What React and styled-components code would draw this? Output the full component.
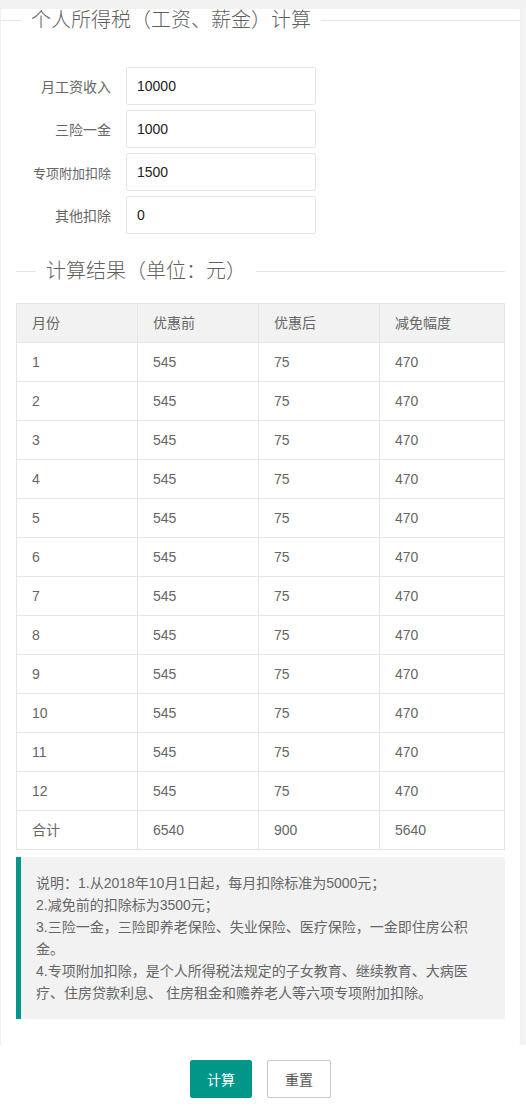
import React from "react";
import styled, { createGlobalStyle } from "styled-components";

const Global = createGlobalStyle`
  html, body { margin: 0; padding: 0; }
  body {
    background: #f2f2f2;
    font-family: "Liberation Sans", "Noto Sans CJK SC", sans-serif;
    font-size: 14px;
    color: #666;
  }
  * { box-sizing: border-box; }
`;

const Page = styled.div`
  padding: 9px 6px 0 1px;
`;

const Card = styled.div`
  background: #fff;
  border-radius: 2px;
  box-shadow: 0 1px 2px rgba(0, 0, 0, 0.05);
  padding-bottom: 26px;
`;

const TitleRow = styled.div`
  display: flex;
  align-items: center;
  height: 22px;
  &::before {
    content: "";
    width: 20px;
    height: 1px;
    background: #e6e6e6;
  }
  &::after {
    content: "";
    flex: 1;
    height: 1px;
    background: #e6e6e6;
  }
`;

const TitleText = styled.span`
  padding: 0 10px;
  font-size: 20px;
  line-height: 22px;
  font-weight: 300;
  color: #5f5f5f;
  white-space: nowrap;
`;

const Form = styled.div`
  margin-top: 36px;
  display: flex;
  flex-direction: column;
  gap: 5px;
`;

const FormRow = styled.div`
  display: flex;
  align-items: center;
`;

const Label = styled.label`
  width: 125px;
  padding-right: 15px;
  text-align: right;
  font-size: ${(p) => (p.$small ? "13px" : "14px")};
  color: #666;
  white-space: nowrap;
`;

const Input = styled.input`
  width: 190px;
  height: 38px;
  border: 1px solid #e6e6e6;
  border-radius: 2px;
  padding: 0 10px;
  font-family: "Liberation Sans", "Noto Sans CJK SC", sans-serif;
  font-size: 14px;
  color: #222;
  background: #fff;
  outline: none;
`;

const Section = styled.div`
  padding: 0 15px;
  margin-top: 26px;
`;

const Table = styled.table`
  margin-top: 21px;
  width: 100%;
  border-collapse: collapse;
  table-layout: fixed;
`;

const Th = styled.th`
  background: #f2f2f2;
  font-weight: 400;
  text-align: left;
  color: #666;
  font-size: 14px;
  line-height: 20px;
  padding: 9px 15px;
  border: 1px solid #e6e6e6;
`;

const Td = styled.td`
  color: #666;
  font-size: 14px;
  line-height: 20px;
  padding: 9px 15px;
  border: 1px solid #e6e6e6;
`;

const Quote = styled.div`
  margin-top: 7px;
  background: #f2f2f2;
  border-left: 5px solid #009688;
  border-radius: 0 2px 2px 0;
  padding: 15px 29px 15px 15px;
  line-height: 22px;
  font-size: 14px;
  color: #666;
`;

const FooterWrap = styled.div`
  margin: 0 -6px 0 -1px;
`;

const Footer = styled.div`
  background: #fff;
  height: 65px;
  padding: 15px 5px 0 0;
  display: flex;
  justify-content: center;
  align-items: flex-start;
  gap: 15px;
`;

const Button = styled.button`
  height: 38px;
  padding: 0 ${(p) => (p.$primary ? "17px" : "16px")};
  border-radius: 2px;
  font-family: "Liberation Sans", "Noto Sans CJK SC", sans-serif;
  font-size: 14px;
  cursor: pointer;
  border: 1px solid ${(p) => (p.$primary ? "#c9c9c9" : "#009688")};
  background: ${(p) => (p.$primary ? "#fff" : "#009688")};
  color: ${(p) => (p.$primary ? "#555" : "#fff")};
`;

const fields = [
  { label: "月工资收入", value: "10000" },
  { label: "三险一金", value: "1000" },
  { label: "专项附加扣除", value: "1500", small: true },
  { label: "其他扣除", value: "0" },
];

const rows = Array.from({ length: 12 }, (_, i) => [String(i + 1), "545", "75", "470"]);
rows.push(["合计", "6540", "900", "5640"]);

export default function App() {
  return (
    <>
      <Global />
      <Page>
        <Card>
          <TitleRow>
            <TitleText>个人所得税（工资、薪金）计算</TitleText>
          </TitleRow>
          <Form>
            {fields.map((f) => (
              <FormRow key={f.label}>
                <Label $small={f.small}>{f.label}</Label>
                <Input defaultValue={f.value} />
              </FormRow>
            ))}
          </Form>
          <Section>
            <TitleRow>
              <TitleText>计算结果（单位：元）</TitleText>
            </TitleRow>
            <Table>
              <colgroup>
                <col style={{ width: "121px" }} />
                <col style={{ width: "121px" }} />
                <col style={{ width: "121px" }} />
                <col />
              </colgroup>
              <thead>
                <tr>
                  <Th>月份</Th>
                  <Th>优惠前</Th>
                  <Th>优惠后</Th>
                  <Th>减免幅度</Th>
                </tr>
              </thead>
              <tbody>
                {rows.map((r) => (
                  <tr key={r[0]}>
                    {r.map((c, j) => (
                      <Td key={j}>{c}</Td>
                    ))}
                  </tr>
                ))}
              </tbody>
            </Table>
            <Quote>
              说明：1.从2018年10月1日起，每月扣除标准为5000元；
              <br />
              2.减免前的扣除标为3500元；
              <br />
              3.三险一金，三险即养老保险、失业保险、医疗保险，一金即住房公积金。
              <br />
              4.专项附加扣除，是个人所得税法规定的子女教育、继续教育、大病医疗、住房贷款利息、 住房租金和赡养老人等六项专项附加扣除。
            </Quote>
          </Section>
        </Card>
        <FooterWrap>
          <Footer>
            <Button>计算</Button>
            <Button $primary>重置</Button>
          </Footer>
        </FooterWrap>
      </Page>
    </>
  );
}
